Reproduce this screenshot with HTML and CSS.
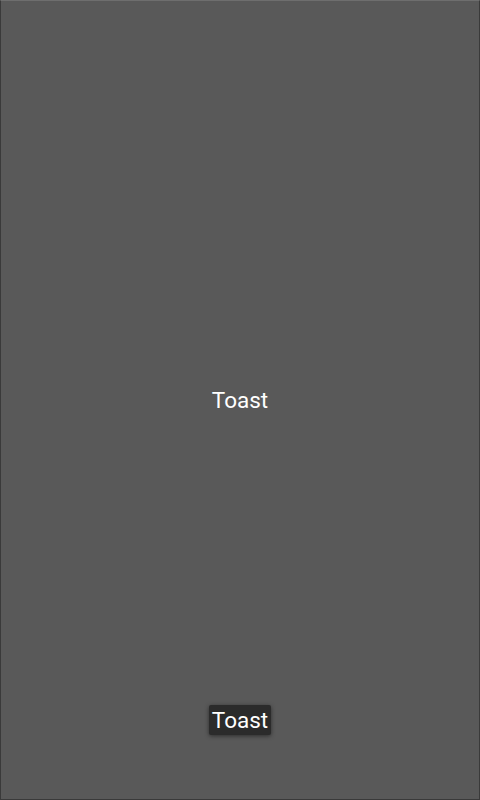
FILE: index.html
```html
<!DOCTYPE html>
<html>
<head>
<meta charset="utf-8">
<link rel="stylesheet" href="styles.css">
</head>
<body>
<div class="screen">
  <div class="center"><span class="label">Toast</span></div>
  <div class="bottom"><span class="toast">Toast</span></div>
</div>
</body>
</html>
```
FILE: styles.css
```css
html, body { margin: 0; padding: 0; }
body { background: #595959; font-family: Roboto, "Noto Sans", sans-serif; }
.screen {
  box-sizing: border-box;
  width: 480px; height: 800px;
  background: #595959;
  border-top: 1px solid #6e6e6e;
  border-left: 1px solid #3a3a3a;
  border-right: 1px solid #3a3a3a;
  border-bottom: 1px solid #3a3a3a;
  display: grid;
  grid-template: 1fr / 1fr;
}
.center, .bottom { grid-area: 1 / 1; }
.center {
  display: flex; align-items: center; justify-content: center;
}
.label { color: #ffffff; font-size: 22.5px; line-height: 26px; }
.bottom {
  display: flex; justify-content: center; align-items: flex-end;
  padding-bottom: 64px;
}
.toast {
  background: #2b2b2b;
  color: #ffffff;
  font-size: 22.5px; line-height: 30px;
  padding: 0 3px;
  border-radius: 2px;
  box-shadow: 0 1px 4px rgba(0,0,0,0.5);
}
```
